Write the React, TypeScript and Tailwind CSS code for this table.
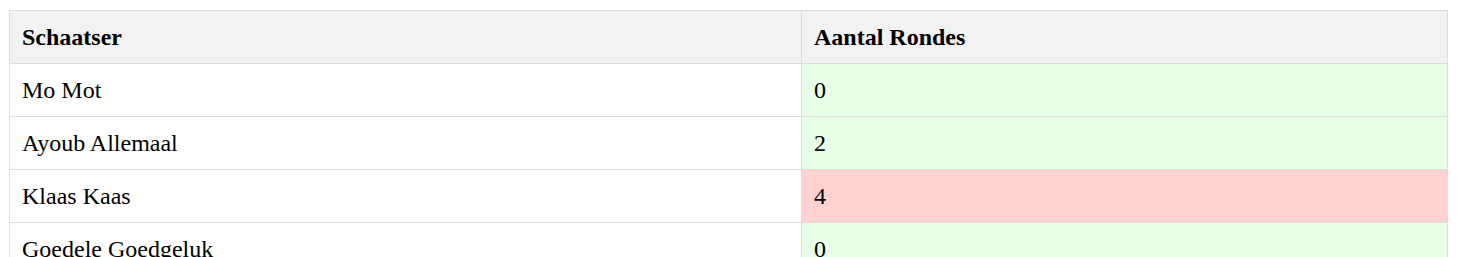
import React from "react";

const rows = [
  { naam: "Mo Mot", rondes: 0 },
  { naam: "Ayoub Allemaal", rondes: 2 },
  { naam: "Klaas Kaas", rondes: 4 },
  { naam: "Goedele Goedgeluk", rondes: 0 },
];

const App = () => {
  return (
    <div className="pl-[9px] pt-[10px] bg-white font-['Liberation_Serif',serif] text-black">
      <table className="border-collapse w-[1439px] text-[24px]">
        <thead>
          <tr className="bg-[#f2f2f2]">
            <th className="border border-[#ddd] px-3 py-3 text-left font-bold w-[792px] leading-[28px]">
              Schaatser
            </th>
            <th className="border border-[#ddd] px-3 py-3 text-left font-bold leading-[28px]">
              Aantal Rondes
            </th>
          </tr>
        </thead>
        <tbody>
          {rows.map((r) => (
            <tr key={r.naam}>
              <td className="border border-[#ddd] px-3 py-3 leading-[28px]">{r.naam}</td>
              <td
                className={`border border-[#ddd] px-3 py-3 leading-[28px] ${
                  r.rondes > 3 ? "bg-[#ffd1d1]" : "bg-[#e6ffe6]"
                }`}
              >
                {r.rondes}
              </td>
            </tr>
          ))}
        </tbody>
      </table>
    </div>
  );
};

export default App;
